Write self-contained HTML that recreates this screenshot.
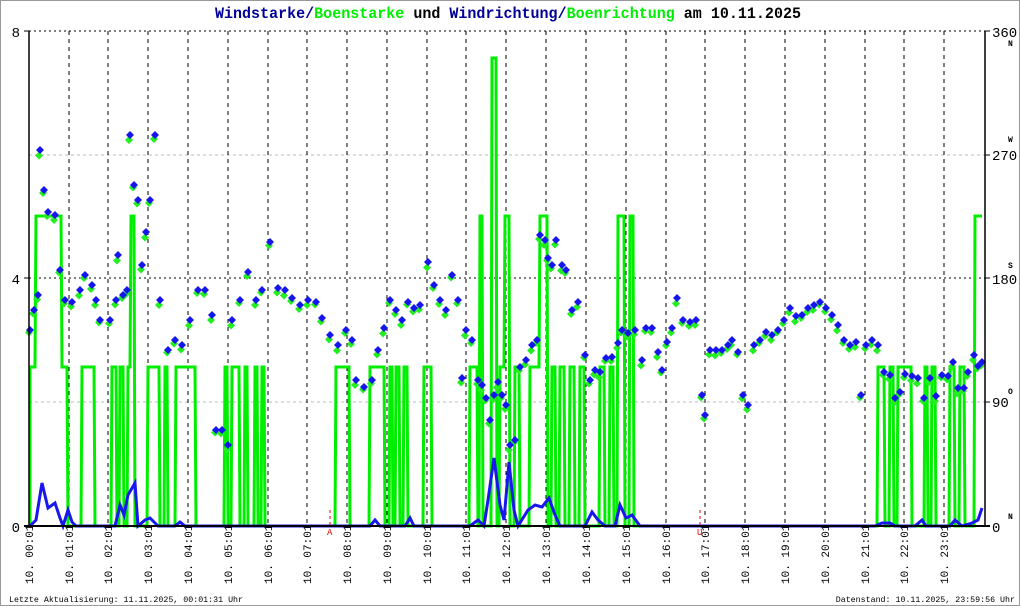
<!DOCTYPE html>
<html><head><meta charset="utf-8"><style>
html,body{margin:0;padding:0;background:#fff}
svg{display:block}
text{font-family:"Liberation Mono",monospace}
</style></head><body>
<svg id="s" width="1020" height="606" viewBox="0 0 1020 606" xmlns="http://www.w3.org/2000/svg">
<rect x="0.5" y="0.5" width="1019" height="605" fill="#fff" stroke="#999"/>
<text x="508" y="18" text-anchor="middle" font-size="16" font-weight="bold" fill="#000099" textLength="586" lengthAdjust="spacingAndGlyphs"><tspan>Windstarke/</tspan><tspan fill="#00ee00">Boenstarke</tspan><tspan fill="#000"> und </tspan><tspan>Windrichtung/</tspan><tspan fill="#00ee00">Boenrichtung</tspan><tspan fill="#000"> am 10.11.2025</tspan></text>
<g id="grid"></g>
<g id="data"></g>
<line x1="29" y1="31" x2="29" y2="526" stroke="#000" stroke-width="1.5"/>
<line x1="985" y1="31" x2="985" y2="526" stroke="#000" stroke-width="1.5"/>
<line x1="24" y1="526" x2="990" y2="526" stroke="#000" stroke-width="2"/>
<g font-size="14" fill="#000">
<text x="20" y="37" text-anchor="end">8</text>
<text x="20" y="284" text-anchor="end">4</text>
<text x="20" y="532" text-anchor="end">0</text>
<text x="992" y="37">360</text>
<text x="992" y="160">270</text>
<text x="992" y="284">180</text>
<text x="992" y="407">90</text>
<text x="992" y="532">0</text>
</g>
<g font-size="8" font-weight="bold" fill="#000">
<text x="1008" y="46">N</text><text x="1008" y="142">W</text><text x="1008" y="268">S</text><text x="1008" y="394">O</text><text x="1008" y="519">N</text>
</g>
<g stroke="#000" stroke-width="1">
<line x1="24" y1="31" x2="29" y2="31"/><line x1="24" y1="278" x2="29" y2="278"/>
<line x1="985" y1="31" x2="990" y2="31"/><line x1="985" y1="155" x2="990" y2="155"/><line x1="985" y1="278" x2="990" y2="278"/><line x1="985" y1="402" x2="990" y2="402"/>
</g>
<g id="labels" font-size="11" fill="#000"></g>
<g stroke="#e00" stroke-dasharray="3,3" stroke-width="1"><line x1="330" y1="510" x2="330" y2="526"/><line x1="700" y1="510" x2="700" y2="526"/></g>
<text x="327" y="535" font-size="9" fill="#e00">A</text><text x="697" y="535" font-size="9" fill="#e00">U</text>
<text x="9" y="602" font-size="8.3" fill="#000">Letzte Aktualisierung: 11.11.2025, 00:01:31 Uhr</text>
<text x="1015" y="602" font-size="8.3" fill="#000" text-anchor="end">Datenstand: 10.11.2025, 23:59:56 Uhr</text>
</svg>
<script>
var NS="http://www.w3.org/2000/svg";
function el(p,t,a,txt){var e=document.createElementNS(NS,t);for(var k in a)e.setAttribute(k,a[k]);if(txt)e.textContent=txt;p.appendChild(e);return e;}
var g=document.getElementById('grid'),d=document.getElementById('data'),L=document.getElementById('labels');
el(g,'line',{x1:29,y1:31,x2:985,y2:31,stroke:'#000','stroke-dasharray':'2,3'});
el(g,'line',{x1:29,y1:278,x2:985,y2:278,stroke:'#000','stroke-dasharray':'2,3'});
el(g,'line',{x1:29,y1:155,x2:985,y2:155,stroke:'#bbb','stroke-dasharray':'3,3'});
el(g,'line',{x1:29,y1:402,x2:985,y2:402,stroke:'#bbb','stroke-dasharray':'3,3'});
for(var h=0;h<24;h++){var x=Math.round(28.7+39.8*h);
 if(h>0)el(g,'line',{x1:x,y1:31,x2:x,y2:526,stroke:'#000','stroke-dasharray':'4,4'});
 var hh=(h<10?'0':'')+h;
 el(L,'text',{transform:'translate('+(x+4)+',584) rotate(-90)'},'10. '+hh+':01');}
var lv={0:526,1:367,2:216,3:58};
var st=[[30,1],[36,2],[62,1],[68,0],[82,1],[95,0],[112,1],[117,0],[120,1],[124,0],[128,1],[131,2],[135,0],[148,1],[160,0],[165,1],[168,0],[176,1],[196,0],[225,1],[228,0],[232,1],[240,0],[245,1],[248,0],[255,1],[258,0],[262,1],[265,0],[336,1],[350,0],[370,1],[385,0],[390,1],[393,0],[396,1],[400,0],[404,1],[408,0],[424,1],[432,0],[470,1],[478,0],[480,2],[483,0],[492,3],[497,0],[500,1],[505,2],[510,0],[515,1],[520,0],[530,1],[540,2],[548,0],[552,1],[556,0],[560,1],[565,0],[570,1],[575,0],[580,1],[585,0],[600,1],[605,0],[610,1],[614,0],[618,2],[625,0],[630,2],[634,0],[878,1],[885,0],[890,1],[894,0],[898,1],[912,0],[925,1],[928,0],[932,1],[936,0],[950,1],[955,0],[960,1],[965,0],[975,2],[982,2]];
var p='M30 526';for(var i=0;i<st.length;i++){var y=lv[st[i][1]];p+=' L'+st[i][0]+' '+y;if(i+1<st.length)p+=' L'+(st[i+1][0]-1)+' '+y;}
el(d,'path',{d:p,fill:'none',stroke:'#00ee00','stroke-width':3});
var bw=[[30,526],[36,520],[42,483],[48,508],[55,503],[60,518],[63,526],[68,510],[72,522],[76,526],[115,526],[120,505],[124,515],[128,495],[135,483],[138,526],[145,520],[150,518],[158,526],[175,526],[180,522],[185,526],[230,526],[270,526],[330,526],[370,526],[375,520],[380,526],[405,526],[410,518],[414,526],[470,526],[478,520],[484,526],[488,500],[494,458],[500,505],[504,520],[509,462],[514,510],[518,526],[528,510],[535,505],[542,507],[549,498],[555,515],[560,526],[585,526],[592,512],[598,520],[605,526],[615,526],[620,505],[626,518],[632,515],[640,526],[875,526],[882,523],[890,523],[895,526],[915,526],[922,520],[926,526],[950,526],[955,520],[962,526],[972,523],[978,520],[982,508]];
var q='M'+bw.map(function(a){return a[0]+' '+a[1]}).join(' L');
el(d,'path',{d:q,fill:'none',stroke:'#1818ee','stroke-width':3});
var k=[[30,330],[34,310],[38,295],[40,150],[44,190],[48,212],[55,215],[60,270],[65,300],[72,302],[80,290],[85,275],[92,285],[96,300],[100,320],[110,320],[116,300],[118,255],[123,295],[127,290],[130,135],[134,185],[138,200],[142,265],[146,232],[150,200],[155,135],[160,300],[168,350],[175,340],[182,345],[190,320],[198,290],[205,290],[212,315],[216,430],[222,430],[228,445],[232,320],[240,300],[248,272],[256,300],[262,290],[270,242],[278,288],[285,290],[292,298],[300,305],[308,300],[316,302],[322,318],[330,335],[338,345],[346,330],[352,340],[356,380],[364,387],[372,380],[378,350],[384,328],[390,300],[396,310],[402,320],[408,302],[414,308],[420,305],[428,262],[434,285],[440,300],[446,310],[452,275],[458,300],[462,378],[466,330],[472,340],[478,380],[482,385],[486,398],[490,420],[494,395],[498,382],[502,395],[506,405],[510,445],[515,440],[520,367],[526,360],[532,345],[537,340],[540,235],[545,240],[548,258],[552,265],[556,240],[562,265],[566,270],[572,310],[578,302],[585,355],[590,380],[595,370],[600,372],[606,358],[612,357],[618,343],[622,330],[628,333],[635,330],[642,360],[646,328],[652,328],[658,352],[662,370],[667,342],[672,328],[677,298],[683,320],[690,322],[696,320],[702,395],[705,415],[710,350],[716,350],[722,350],[728,345],[732,340],[738,352],[743,395],[748,405],[754,345],[760,340],[766,332],[772,335],[778,330],[784,320],[790,308],[796,316],[802,315],[808,308],[814,305],[820,302],[826,308],[832,315],[838,325],[844,340],[850,345],[856,342],[861,395],[866,345],[872,340],[878,345],[884,372],[890,375],[895,398],[900,392],[905,374],[912,376],[918,378],[924,398],[930,378],[936,396],[942,375],[948,376],[953,362],[958,388],[964,388],[968,372],[974,355],[978,366],[982,362]];
function dm(x,y,c){el(d,'path',{d:'M'+x+' '+(y-4)+' L'+(x+4)+' '+y+' L'+x+' '+(y+4)+' L'+(x-4)+' '+y+'Z',fill:c});}
k.forEach(function(a,i){var o=((i*37)%7)-3;dm(a[0]-1,a[1]+4+o/2,'#22ee22');});
k.forEach(function(a){dm(a[0],a[1],'#1515ee');});
</script>
</body></html>
